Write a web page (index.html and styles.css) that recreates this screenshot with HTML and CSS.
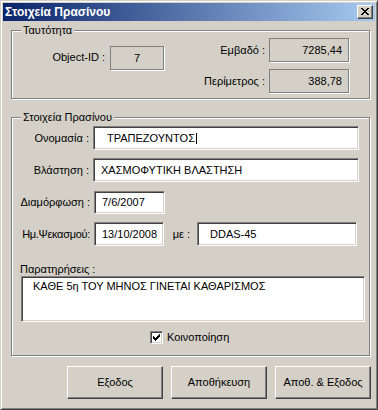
FILE: index.html
```html
<!DOCTYPE html>
<html lang="el">
<head>
<meta charset="utf-8">
<title>Στοιχεία Πρασίνου</title>
<link rel="stylesheet" href="styles.css">
</head>
<body>
<div class="window">
  <div class="titlebar">
    <span class="title">Στοιχεία Πρασίνου</span>
    <span class="close-btn">
      <svg width="8" height="7" viewBox="0 0 8 7"><path d="M0 0h2v1H0zM6 0h2v1H6zM1 1h2v1H1zM5 1h2v1H5zM2 2h4v1H2zM3 3h2v1H3zM2 4h4v1H2zM1 5h2v1H1zM5 5h2v1H5zM0 6h2v1H0zM6 6h2v1H6z" fill="#000"/></svg>
    </span>
  </div>
  <div class="client">
    <div class="group group-id">
      <span class="legend">Ταυτότητα</span>
      <span class="lbl lbl-oid">Object-ID :</span>
      <span class="static static-oid">7</span>
      <span class="lbl lbl-right">Εμβαδό :</span>
      <span class="static static-num">7285,44</span>
      <span class="lbl lbl-right">Περίμετρος :</span>
      <span class="static static-num">388,78</span>
    </div>

    <div class="group group-data">
      <span class="legend">Στοιχεία Πρασίνου</span>
      <div class="row row-1">
        <span class="lbl lbl-field">Ονομασία :</span>
        <span class="edit edit-wide edit-indent">ΤΡΑΠΕΖΟΥΝΤΟΣ<span class="caret"></span></span>
      </div>
      <div class="row row-2">
        <span class="lbl lbl-field">Βλάστηση :</span>
        <span class="edit edit-wide">ΧΑΣΜΟΦΥΤΙΚΗ ΒΛΑΣΤΗΣΗ</span>
      </div>
      <div class="row row-3">
        <span class="lbl lbl-field lbl-field-wide">Διαμόρφωση :</span>
        <span class="edit edit-date">7/6/2007</span>
      </div>
      <div class="row row-4">
        <span class="lbl lbl-field lbl-field-wide lbl-tight">Ημ.Ψεκασμού:</span>
        <span class="edit edit-date2">13/10/2008</span>
        <span class="lbl lbl-with">με :</span>
        <span class="edit edit-code">DDAS-45</span>
      </div>
      <div class="remarks-label">Παρατηρήσεις :</div>
      <div class="edit memo">ΚΑΘΕ 5η ΤΟΥ ΜΗΝΟΣ ΓΙΝΕΤΑΙ ΚΑΘΑΡΙΣΜΟΣ</div>
      <div class="check-row">
        <span class="checkbox">
          <svg width="7" height="7" viewBox="0 0 7 7"><path d="M6 0h1v3H6zM5 1h1v3H5zM4 2h1v3H4zM3 3h1v3H3zM2 4h1v3H2zM1 3h1v3H1zM0 2h1v3H0z" fill="#000"/></svg>
        </span>
        <span class="check-text">Κοινοποίηση</span>
      </div>
    </div>

    <div class="buttons">
      <span class="btn">Εξοδος</span>
      <span class="btn">Αποθήκευση</span>
      <span class="btn">Αποθ. &amp; Εξοδος</span>
    </div>
  </div>
</div>
</body>
</html>
```

FILE: styles.css
```css
* { box-sizing: border-box; }

html, body {
  margin: 0;
  padding: 0;
  background: #d4d0c8;
}

body {
  font-family: "Liberation Sans", Arial, sans-serif;
  font-size: 11px;
  color: #000;
}

.window {
  width: 378px;
  height: 410px;
  background: #d4d0c8;
  border: 1px solid;
  border-color: #d4d0c8 #404040 #404040 #d4d0c8;
  box-shadow: inset 1px 1px 0 #fff, inset -1px -1px 0 #808080;
  padding: 2px;
}

.titlebar {
  height: 18px;
  background: linear-gradient(to right, #0a246a, #a6caf0);
  display: flex;
  align-items: center;
  justify-content: space-between;
  padding: 0 2px 0 2px;
}

.title {
  color: #fff;
  font-weight: bold;
  font-size: 12px;
  line-height: 14px;
}

.close-btn {
  width: 16px;
  height: 14px;
  background: #d4d0c8;
  border: 1px solid;
  border-color: #fff #404040 #404040 #fff;
  box-shadow: inset -1px -1px 0 #808080;
  display: flex;
  align-items: center;
  justify-content: center;
  padding: 0 0 1px 0;
}

.close-btn svg { display: block; }

.client {
  display: flex;
  flex-direction: column;
  padding: 9px 5px 0 8px;
}

.group {
  position: relative;
  border: 1px solid #808080;
  box-shadow: inset 1px 1px 0 #fff, 1px 1px 0 #fff;
}

.legend {
  position: absolute;
  top: -7px;
  left: 9px;
  line-height: 13px;
  padding: 0 2px;
  background: #d4d0c8;
}

.lbl {
  line-height: 13px;
  white-space: nowrap;
}

/* ---- identity group ---- */
.group-id {
  height: 69px;
  display: grid;
  grid-template-columns: 98px 55px 1fr 81px;
  grid-template-rows: 24px 24px;
  row-gap: 7px;
  padding: 7px 19px 0 0;
  align-items: center;
}

.lbl-oid {
  grid-column: 1;
  grid-row: 1 / span 2;
  align-self: start;
  margin-top: 13px;
  text-align: right;
  padding-right: 5px;
}

.lbl-right {
  text-align: right;
  padding-right: 4px;
  grid-column: 3;
}

.static {
  height: 24px;
  border: 1px solid #808080;
  box-shadow: 1px 1px 0 #fff;
  display: flex;
  align-items: center;
  line-height: 13px;
}

.static-oid {
  grid-column: 2;
  grid-row: 1 / span 2;
  align-self: start;
  margin-top: 8px;
  width: 54px;
  justify-content: center;
}

.static-num {
  grid-column: 4;
  width: 80px;
  justify-content: flex-end;
  padding-right: 6px;
}

/* ---- data group ---- */
.group-data {
  height: 239px;
  margin-top: 18px;
  padding: 8px 0 0 0;
  display: flex;
  flex-direction: column;
}

.row {
  display: flex;
  align-items: center;
}

.row-2 { margin-top: 8px; }
.row-3 { margin-top: 9px; }
.row-4 { margin-top: 8px; }

.lbl-field {
  width: 77px;
  margin-right: 4px;
  text-align: right;
}

.lbl-field-wide {
  width: 78px;
  padding-right: 0;
}

.lbl-tight { letter-spacing: -0.3px; }

.edit {
  background: #fff;
  border: 1px solid;
  border-color: #808080 #fff #fff #808080;
  box-shadow: inset 1px 1px 0 #404040, inset -1px -1px 0 #d4d0c8;
  display: flex;
  align-items: center;
  padding-left: 7px;
  line-height: 13px;
  white-space: nowrap;
  overflow: hidden;
}

.edit-wide { width: 266px; height: 24px; }
.edit-indent { padding-left: 13px; }
.edit-date { width: 71px; height: 23px; }
.edit-date2 { width: 70px; height: 24px; }
.edit-code { width: 160px; height: 24px; padding-left: 12px; }

.caret {
  display: inline-block;
  width: 1px;
  height: 11px;
  background: #000;
  margin-left: 1px;
}

.lbl-with {
  width: 29px;
  padding-right: 3px;
  margin-right: 4px;
  text-align: right;
}

.remarks-label {
  margin: 17px 0 0 8px;
  line-height: 13px;
}

.memo {
  width: 344px;
  height: 46px;
  margin-left: 9px;
  align-items: flex-start;
  padding: 3px 0 0 11px;
}

.check-row {
  display: flex;
  align-items: center;
  margin: 9px 0 0 138px;
}

.checkbox {
  width: 13px;
  height: 13px;
  background: #fff;
  border: 1px solid;
  border-color: #808080 #fff #fff #808080;
  box-shadow: inset 1px 1px 0 #404040, inset -1px -1px 0 #d4d0c8;
  display: flex;
  align-items: center;
  justify-content: center;
}

.checkbox svg { display: block; }

.check-text {
  margin-left: 4px;
  line-height: 13px;
}

/* ---- buttons ---- */
.buttons {
  display: flex;
  justify-content: flex-end;
  gap: 8px;
  margin: 10px -1px 0 0;
}

.btn {
  width: 96px;
  height: 33px;
  border: 1px solid;
  border-color: #fff #404040 #404040 #fff;
  box-shadow: inset -1px -1px 0 #808080;
  display: flex;
  align-items: center;
  justify-content: center;
  line-height: 13px;
}
```
